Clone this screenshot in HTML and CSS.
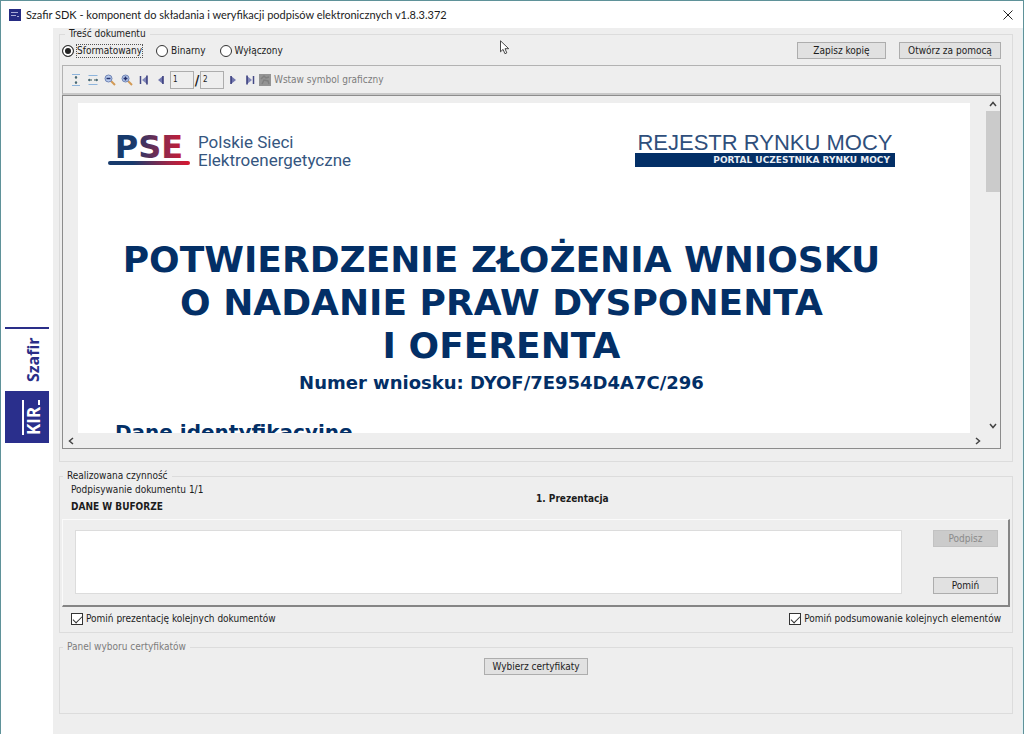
FILE: index.html
```html
<!DOCTYPE html>
<html lang="pl">
<head>
<meta charset="utf-8">
<title>Szafir SDK</title>
<link rel="stylesheet" href="styles.css">
</head>
<body>
<div class="window">
  <header class="titlebar">
    <svg class="app-icon" width="12" height="12" viewBox="0 0 12 12" aria-hidden="true"><rect width="12" height="12" fill="#252b83"/><path d="M2 3.500h7M2 6.500h5M8 7.500h2" stroke="#a9acd6"/></svg>
    <h1 class="title">Szafir SDK - komponent do składania i weryfikacji podpisów elektronicznych v1.8.3.372</h1>
    <button class="close" aria-label="Zamknij"><svg width="10" height="10" viewBox="0 0 10 10"><path d="M.5.500l9 9M9.500.500l-9 9" stroke="#222" fill="none"/></svg></button>
  </header>
  <div class="body">
    <aside class="brand">
      <svg width="44" height="116" viewBox="0 0 44 116" role="img" aria-label="KIR Szafir">
        <rect width="44" height="2" fill="#2a2e88"/>
        <rect y="64" width="44" height="52" fill="#2a2f8c"/>
        <text class="brand-szafir" transform="translate(34 55) rotate(-90)">Szafir</text>
        <text class="brand-kir" transform="translate(35 108) rotate(-90)">KIR</text>
        <rect x="17" y="73" width="2" height="35" fill="#fff"/>
        <rect x="33" y="73" width="2" height="5" fill="#fff"/>
      </svg>
    </aside>
    <main class="main">
      <fieldset class="group group-doc">
        <legend>Treść dokumentu</legend>
        <div class="modes">
          <label class="choice"><input class="radio" type="radio" name="mode" checked><span class="focused">Sformatowany</span></label>
          <label class="choice"><input class="radio" type="radio" name="mode"><span>Binarny</span></label>
          <label class="choice"><input class="radio" type="radio" name="mode"><span>Wyłączony</span></label>
          <div class="mode-actions">
            <button class="btn btn-save">Zapisz kopię</button>
            <button class="btn btn-open">Otwórz za pomocą</button>
          </div>
        </div>
        <div class="toolbar">
          <button class="tool" aria-label="Dopasuj wysokość"><svg width="12" height="12" viewBox="0 0 12 12"><path d="M2 .5h8M2 11.500h8" stroke="#8db4dc"/><path d="M6 2v3M6 7v3" stroke="#355"/><path d="M4.500 4L6 2l1.500 2zM4.500 8L6 10l1.500-2z" fill="#467"/></svg></button>
          <button class="tool" aria-label="Dopasuj szerokość"><svg width="12" height="12" viewBox="0 0 12 12"><path d="M1.500 1.500h9M1.500 10.500h9" stroke="#8db4dc"/><path d="M1 6h4M7 6h4" stroke="#355"/><path d="M3 4.500L1 6l2 1.500zM9 4.500L11 6 9 7.500z" fill="#467"/></svg></button>
          <button class="tool" aria-label="Pomniejsz"><svg width="12" height="12" viewBox="0 0 12 12"><path d="M7 7l4 4" stroke="#d29a55" stroke-width="2"/><circle cx="4.500" cy="4.500" r="3.500" fill="#b9cbed" stroke="#7085b5"/><path d="M2.500 4.500h4" stroke="#23306c" stroke-width="1.500"/></svg></button>
          <button class="tool" aria-label="Powiększ"><svg width="12" height="12" viewBox="0 0 12 12"><path d="M7 7l4 4" stroke="#d29a55" stroke-width="2"/><circle cx="4.500" cy="4.500" r="3.500" fill="#b9cbed" stroke="#7085b5"/><path d="M2.500 4.500h4M4.500 2.500v4" stroke="#23306c" stroke-width="1.500"/></svg></button>
          <button class="tool" aria-label="Pierwsza strona"><svg width="12" height="12" viewBox="0 0 12 12"><path d="M2.500 2v8" stroke="#444a86" stroke-width="1.500"/><path d="M9 2v8L4 6z" fill="#8186b8"/><path d="M9 1.500v9" stroke="#34397a" stroke-width="1.500"/></svg></button>
          <button class="tool" aria-label="Poprzednia strona"><svg width="12" height="12" viewBox="0 0 12 12"><path d="M8 2v8L3 6z" fill="#7075ad"/><path d="M8 2v8" stroke="#34397a" stroke-width="1.500"/></svg></button>
          <input class="page-box" type="text" value="1" aria-label="Strona">
          <span class="slash">/</span>
          <input class="page-box" type="text" value="2" aria-label="Liczba stron" readonly>
          <button class="tool" aria-label="Następna strona"><svg width="12" height="12" viewBox="0 0 12 12"><path d="M4 2v8L9 6z" fill="#7075ad"/><path d="M4 2v8" stroke="#34397a" stroke-width="1.500"/></svg></button>
          <button class="tool" aria-label="Ostatnia strona"><svg width="12" height="12" viewBox="0 0 12 12"><path d="M9.500 2v8" stroke="#444a86" stroke-width="1.500"/><path d="M3 2v8L8 6z" fill="#8186b8"/><path d="M3 1.500v9" stroke="#34397a" stroke-width="1.500"/></svg></button>
          <button class="insert" disabled><svg width="12" height="12" viewBox="0 0 12 12"><rect width="12" height="12" fill="#949494"/><path d="M2 5l3-3 2 2 3-1M3 10l2-4 4 1 1 3" stroke="#808080" fill="none" stroke-width="1.500"/></svg>Wstaw symbol graficzny</button>
        </div>
        <div class="viewer">
          <div class="canvas">
            <article class="page">
              <div class="logos">
                <div class="pse">
                  <svg class="pse-logo" width="82" height="32" viewBox="0 0 82 32" role="img" aria-label="PSE">
                    <defs><linearGradient id="pse" gradientUnits="userSpaceOnUse" x1="0" y1="0" x2="82" y2="0"><stop offset=".3" stop-color="#173a6c"/><stop offset=".75" stop-color="#a02546"/><stop offset="1" stop-color="#d81730"/></linearGradient></defs>
                    <text class="pse-mark" x="41" y="25" text-anchor="middle" fill="url(#pse)">PSE</text>
                    <rect y="28" width="82" height="4" rx="2" fill="url(#pse)"/>
                  </svg>
                  <p class="pse-name">Polskie Sieci<br>Elektroenergetyczne</p>
                </div>
                <div class="rrm">
                  <p class="rrm-name">REJESTR RYNKU MOCY</p>
                  <p class="rrm-sub">PORTAL UCZESTNIKA RYNKU MOCY</p>
                </div>
              </div>
              <h2 class="doc-title">POTWIERDZENIE ZŁOŻENIA WNIOSKU<br>O NADANIE PRAW DYSPONENTA<br>I OFERENTA</h2>
              <p class="doc-number">Numer wniosku: DYOF/7E954D4A7C/296</p>
              <h3 class="doc-section">Dane identyfikacyjne</h3>
            </article>
          </div>
          <div class="vscroll">
            <button class="arrow" aria-label="W górę"><svg width="8" height="6" viewBox="0 0 8 6"><path d="M1 5l3-3.500L7 5" fill="none" stroke="#444" stroke-width="1.500"/></svg></button>
            <div class="thumb"></div>
            <button class="arrow" aria-label="W dół"><svg width="8" height="6" viewBox="0 0 8 6"><path d="M1 1l3 3.500L7 1" fill="none" stroke="#444" stroke-width="1.500"/></svg></button>
          </div>
          <div class="hscroll">
            <button class="arrow" aria-label="W lewo"><svg width="6" height="8" viewBox="0 0 6 8"><path d="M5 1L1.500 4L5 7" fill="none" stroke="#444" stroke-width="1.500"/></svg></button>
            <button class="arrow" aria-label="W prawo"><svg width="6" height="8" viewBox="0 0 6 8"><path d="M1 1l3.500 3L1 7" fill="none" stroke="#444" stroke-width="1.500"/></svg></button>
          </div>
        </div>
      </fieldset>

      <fieldset class="group group-task">
        <legend>Realizowana czynność</legend>
        <div class="status">
          <div class="status-left">
            <p>Podpisywanie dokumentu 1/1</p>
            <p class="strong">DANE W BUFORZE</p>
          </div>
          <p class="strong">1. Prezentacja</p>
        </div>
        <div class="panel">
          <textarea class="log" aria-label="Komunikaty" readonly></textarea>
          <div class="panel-actions">
            <button class="btn" disabled>Podpisz</button>
            <button class="btn">Pomiń</button>
          </div>
        </div>
        <div class="options">
          <label class="choice"><input class="check" type="checkbox" checked><span>Pomiń prezentację kolejnych dokumentów</span></label>
          <label class="choice"><input class="check" type="checkbox" checked><span>Pomiń podsumowanie kolejnych elementów</span></label>
        </div>
      </fieldset>

      <fieldset class="group group-cert">
        <legend class="muted">Panel wyboru certyfikatów</legend>
        <button class="btn btn-cert">Wybierz certyfikaty</button>
      </fieldset>
    </main>
  </div>
  <svg class="cursor" width="10" height="15" viewBox="0 0 10 15" aria-hidden="true"><path d="M.5.800v11l2.600-2.400 1.800 4.300 1.900-.8L5 8.700h3.700z" fill="#fff" stroke="#333" stroke-width=".9"/></svg>
</div>
</body>
</html>
```
FILE: styles.css
```css
* { box-sizing: border-box; }

body {
  margin: 0;
  font-family: "DejaVu Sans Condensed", Tahoma, sans-serif;
  font-size: 10px;
  line-height: 12px;
  color: #1c1c1c;
}

p, h1, h2, h3 { margin: 0; }
svg { display: block; flex: none; }
button, input, textarea { font: inherit; color: inherit; }
button { padding: 0; border: 0; background: none; }

.window {
  position: relative;
  display: flex;
  flex-direction: column;
  min-height: 100vh;
  border: 1px solid #5f9299;
  background: #fff;
}

.titlebar {
  display: flex;
  align-items: center;
  gap: 5px;
  height: 27px;
  padding: 0 10px 0 8px;
}
.title {
  flex: 1;
  font-family: Lato, "Noto Sans", sans-serif;
  font-size: 11px;
  font-weight: 400;
  line-height: 16px;
}
.body { flex: 1; display: flex; }

.brand {
  display: flex;
  flex: none;
  align-items: center;
  width: 52px;
  padding: 8px 4px 0;
}
.brand-szafir { font: bold 16px "Open Sans", sans-serif; fill: #2a2e88; }
.brand-kir { font: bold 17px "Open Sans", sans-serif; fill: #fff; }

.main {
  flex: 1;
  min-width: 0;
  display: flex;
  flex-direction: column;
  gap: 8px;
  padding: 0 9px 20px 6px;
  background: #eee;
  border-right: 1px solid #e3f1f5;
}

.group {
  min-width: 0;
  margin: 0;
  padding: 0;
  border: 1px solid #dcdcdc;
}
.group legend { margin-left: 3px; padding: 0 4px; }
.muted { color: #7c7c7c; }

.group-doc {
  flex: 1;
  display: flex;
  flex-direction: column;
  padding: 0 11px 12px 2px;
}
.modes {
  display: flex;
  align-items: center;
  gap: 14px;
  height: 25px;
  padding-bottom: 4px;
}
.choice { display: flex; align-items: center; gap: 3px; }
.focused { outline: 1px dotted #555; }
.mode-actions { display: flex; gap: 13px; margin-left: auto; }

.radio {
  appearance: none;
  width: 12px;
  height: 12px;
  margin: 0;
  border: 1px solid #333;
  border-radius: 50%;
  background: #fff;
}
.radio:checked { background: #222; box-shadow: inset 0 0 0 2px #fff; }

.check {
  appearance: none;
  display: grid;
  place-items: center;
  width: 12px;
  height: 12px;
  margin: 0;
  border: 1px solid #333;
  background: #fff;
}
.check:checked::after {
  content: "";
  width: 8px;
  height: 4px;
  margin-bottom: 2px;
  border: solid #333;
  border-width: 0 0 1px 1px;
  transform: rotate(-45deg);
}

.btn {
  height: 17px;
  border: 1px solid #adadad;
  background: #e1e1e1;
  text-align: center;
}
.btn:disabled { background: #cbcbcb; border-color: #c2c2c2; color: #8a8a8a; }
.btn-save { width: 89px; }
.btn-open { width: 102px; }

.toolbar {
  display: flex;
  align-items: center;
  gap: 5px;
  height: 30px;
  padding-left: 7px;
  border: 1px solid #b2b2b2;
  border-bottom: 2px solid #c8c8c8;
}
.page-box {
  width: 24px;
  height: 18px;
  margin: 0 -2px;
  padding: 0 2px;
  border: 1px solid #adadad;
  background: #eee;
  font-size: 8px;
}
.slash { width: 6px; margin: 0 -3px; font-size: 14px; font-weight: bold; text-align: center; }
.insert { display: flex; align-items: center; gap: 3px; margin-left: -2px; color: #7c7c7c; }

.viewer {
  flex: 1;
  display: grid;
  grid-template-columns: 1fr 15px;
  grid-template-rows: 1fr 15px;
  min-height: 0;
  border: 1px solid #8c8c8c;
}
.canvas {
  display: flex;
  min-height: 0;
  padding: 7px 15px 0;
  overflow: hidden;
}
.page {
  flex: 1;
  height: 330px;
  padding: 30px 75px 0 30px;
  overflow: hidden;
  background: #fff;
  color: #032f66;
  font-family: "DejaVu Sans", sans-serif;
  font-weight: bold;
}
.logos { display: flex; justify-content: space-between; height: 105px; }
.pse { display: flex; gap: 8px; }
.pse-logo { overflow: visible; }
.pse-mark { font: bold 32px "DejaVu Sans", sans-serif; }
.pse-name {
  font: 17px/18px "Roboto", sans-serif;
  color: #35567f;
}
.rrm { width: 260px; }
.rrm-name { font: 22px/20px "Liberation Sans", sans-serif; color: #2f4f7c; text-align: center; white-space: nowrap; }
.rrm-sub {
  padding: 0 5px;
  background: #032f66;
  color: #e8edf4;
  font: bold 9px/14px "DejaVu Sans", sans-serif;
  text-align: right;
  white-space: nowrap;
}
.doc-title { font-size: 36px; line-height: 43px; text-align: center; }
.doc-number { margin-top: 4px; font-size: 18px; line-height: 24px; text-align: center; }
.doc-section { margin: 25px 0 0 7px; font-size: 20px; line-height: 24px; }

.vscroll {
  grid-row: 1 / 3;
  grid-column: 2;
  display: flex;
  flex-direction: column;
  align-items: center;
  padding: 0 0 15px;
}
.hscroll {
  grid-row: 2;
  grid-column: 1;
  display: flex;
  align-items: center;
  justify-content: space-between;
}
.arrow { display: grid; place-items: center; width: 15px; height: 15px; }
.thumb { width: 14px; height: 81px; margin-bottom: auto; background: #cbcbcb; }

.status {
  display: grid;
  grid-template-columns: 1fr 1fr;
  align-items: center;
  height: 37px;
  padding-bottom: 4px;
}
.status-left { display: grid; gap: 5px; padding-left: 11px; }
.strong { font-weight: bold; }
.panel {
  display: flex;
  justify-content: space-between;
  gap: 31px;
  height: 88px;
  margin: 0 2px 0 2px;
  padding: 10px 10px 11px 12px;
  border: 1px solid #fafafa;
  border-right: 2px solid #858585;
  border-bottom: 2px solid #858585;
}
.log {
  flex: 1;
  resize: none;
  border: 1px solid #dcdcdc;
  background: #fff;
}
.panel-actions { display: flex; flex-direction: column; justify-content: space-between; }
.panel-actions .btn { width: 65px; }
.options {
  display: flex;
  align-items: center;
  justify-content: space-between;
  height: 24px;
  padding: 0 11px 0 11px;
}
.group-task { height: 163px; }

.group-cert { height: 73px; text-align: center; }
.group-cert legend { text-align: left; }
.btn-cert { width: 104px; margin-top: 5px; }

.cursor { position: absolute; left: 499px; top: 39px; }
```
